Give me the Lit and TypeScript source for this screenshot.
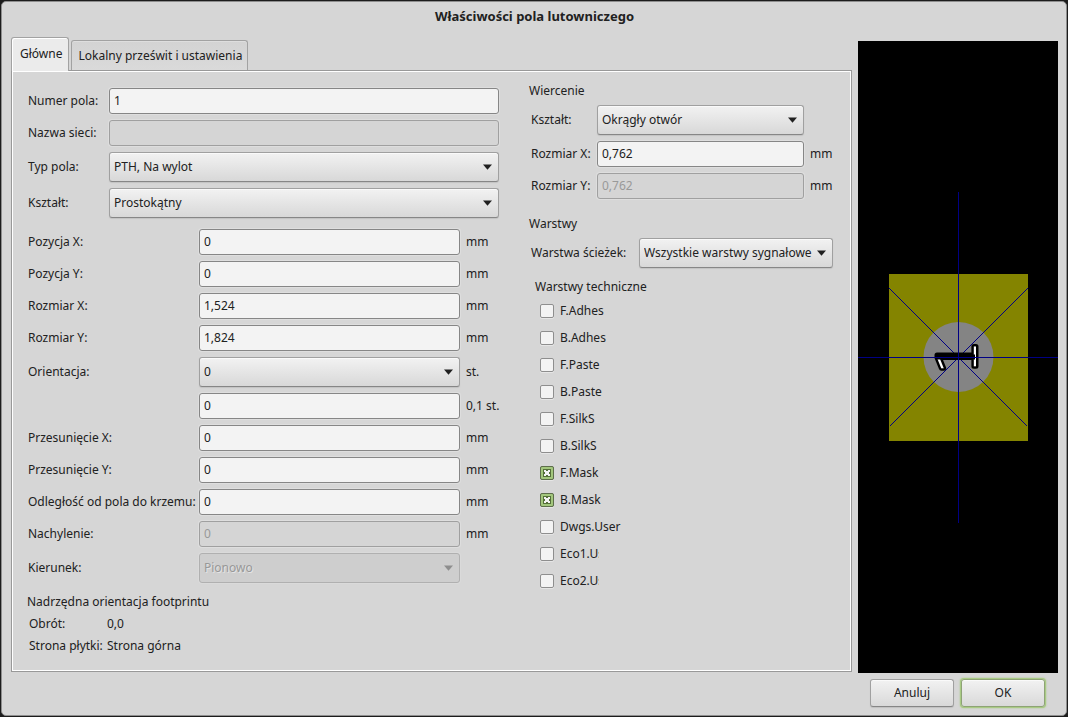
import { LitElement, html, css, svg, nothing } from "lit";
import { customElement, state } from "lit/decorators.js";
import { classMap } from "lit/directives/class-map.js";

interface Field {
  id: string;
  label: string;
  value: string;
  kind?: "select";
  unit?: string;
  disabled?: boolean;
}

const IDENTITY: Field[] = [
  { id: "number", label: "Numer pola:", value: "1" },
  { id: "net", label: "Nazwa sieci:", value: "", disabled: true },
  { id: "type", label: "Typ pola:", value: "PTH, Na wylot", kind: "select" },
  { id: "shape", label: "Kształt:", value: "Prostokątny", kind: "select" },
];

const GEOMETRY: Field[] = [
  { id: "pos-x", label: "Pozycja X:", value: "0", unit: "mm" },
  { id: "pos-y", label: "Pozycja Y:", value: "0", unit: "mm" },
  { id: "size-x", label: "Rozmiar X:", value: "1,524", unit: "mm" },
  { id: "size-y", label: "Rozmiar Y:", value: "1,824", unit: "mm" },
  { id: "orient", label: "Orientacja:", value: "0", kind: "select", unit: "st." },
  { id: "orient-fine", label: "", value: "0", unit: "0,1 st." },
  { id: "offset-x", label: "Przesunięcie X:", value: "0", unit: "mm" },
  { id: "offset-y", label: "Przesunięcie Y:", value: "0", unit: "mm" },
  { id: "die", label: "Odległość od pola do krzemu:", value: "0", unit: "mm" },
  { id: "delta", label: "Nachylenie:", value: "0", unit: "mm", disabled: true },
  { id: "dir", label: "Kierunek:", value: "Pionowo", kind: "select", disabled: true },
];

const DRILL: Field[] = [
  { id: "drill-shape", label: "Kształt:", value: "Okrągły otwór", kind: "select" },
  { id: "drill-x", label: "Rozmiar X:", value: "0,762", unit: "mm" },
  { id: "drill-y", label: "Rozmiar Y:", value: "0,762", unit: "mm", disabled: true },
];

const COPPER: Field[] = [
  { id: "copper", label: "Warstwa ścieżek:", value: "Wszystkie warstwy sygnałowe", kind: "select" },
];

const LAYERS = [
  { name: "F.Adhes" },
  { name: "B.Adhes" },
  { name: "F.Paste" },
  { name: "B.Paste" },
  { name: "F.SilkS" },
  { name: "B.SilkS" },
  { name: "F.Mask", on: true },
  { name: "B.Mask", on: true },
  { name: "Dwgs.User" },
  { name: "Eco1.User", clipped: true },
  { name: "Eco2.User", clipped: true },
];

@customElement("app-root")
export class AppRoot extends LitElement {
  @state() private tab = 0;

  static styles = css`
    :host {
      display: flex;
      min-height: 100vh;
      box-sizing: border-box;
      padding: 1px 1px 2px;
      background: #1c1c1c;
      font: 12px/18px "Noto Sans", sans-serif;
      color: #212121;
    }
    * {
      box-sizing: border-box;
    }
    .dialog {
      flex: 1;
      display: flex;
      flex-direction: column;
      min-width: 0;
      background: #d6d6d6;
      border: 1px solid #8e8e8e;
      border-radius: 5px;
      padding: 5px 8px 8px 9px;
    }
    .title {
      margin: 0;
      font-size: 13px;
      line-height: 18px;
      font-weight: 700;
      text-align: center;
    }
    .main {
      flex: 1;
      display: flex;
      gap: 6px;
      margin-top: 14px;
    }
    .book {
      flex: 1;
      min-width: 0;
      display: flex;
      flex-direction: column;
    }
    .tabs {
      display: flex;
      align-items: flex-end;
      gap: 2px;
      height: 31px;
    }
    .tab {
      height: 30px;
      padding: 0 5px 0 6px;
      font: inherit;
      color: inherit;
      white-space: nowrap;
      border: 1px solid #a2a2a2;
      border-bottom: 0;
      border-radius: 3px 3px 0 0;
      background: linear-gradient(#d3d3d3, #dadada);
      box-shadow: inset 0 1px #dedede;
    }
    .tab.active {
      height: 34px;
      margin-bottom: -1px;
      padding: 0 6px 1px 8px;
      background: #ebebeb;
      box-shadow: inset 1px 1px #fff;
      position: relative;
    }
    .panel {
      flex: 1;
      display: flex;
      gap: 30px;
      padding: 17px 15px 15px 16px;
      border: 1px solid #999;
      box-shadow: inset 0 0 0 1px #fff;
    }
    .left {
      flex: 1;
      min-width: 0;
    }
    .right {
      width: 307px;
    }
    .form {
      display: grid;
      gap: 6px 0;
      align-items: center;
    }
    .identity {
      grid-template-columns: 81px minmax(0, 1fr);
    }
    .geometry {
      grid-template-columns: 171px minmax(0, 1fr) 39px;
      margin-top: 11px;
    }
    .drill {
      grid-template-columns: 66px minmax(0, 1fr) 32px;
      margin: 5px 0 0 2px;
    }
    .copper {
      grid-template-columns: 108px minmax(0, 1fr);
      margin: 5px 3px 0 2px;
    }
    .label,
    .unit {
      white-space: nowrap;
    }
    .unit {
      padding-left: 6px;
    }
    .input,
    .select {
      width: 100%;
      min-width: 0;
      margin: 0;
      font: inherit;
      color: inherit;
      border-radius: 3px;
      outline: 0;
    }
    .input {
      height: 26px;
      padding: 0 4px 2px;
      border: 1px solid #868686;
      background: #f3f3f3;
      box-shadow: 0 0 0 1px #dedede;
    }
    .input:disabled {
      border-color: #a0a0a0;
      background: #d5d5d5;
      color: #999;
    }
    .combo {
      display: grid;
      align-items: center;
    }
    .combo > * {
      grid-area: 1 / 1;
    }
    .select {
      appearance: none;
      height: 30px;
      padding: 0 17px 0 4px;
      border: 1px solid #a0a0a0;
      border-bottom-color: #868686;
      background: linear-gradient(#f2f2f2, #d8d8d8);
      box-shadow: inset 0 1px #fafafa, 0 1px 1px #c2c2c2;
    }
    .select:disabled {
      opacity: 1;
      border-color: #b0b0b0;
      background: #cecece;
      color: #989898;
      text-shadow: 1px 1px #e4e4e4;
      box-shadow: 0 0 0 1px #dadada;
    }
    .caret {
      justify-self: end;
      margin-right: 7px;
      width: 9px;
      height: 6px;
      fill: #202020;
      pointer-events: none;
    }
    .select:disabled + .caret {
      fill: #8e8e8e;
    }
    .heading {
      margin: 0;
      font: inherit;
    }
    .right > .heading:first-child {
      margin-top: -6px;
    }
    .drill + .heading {
      margin-top: 16px;
    }
    .tech {
      margin: 10px 0 0 6px;
    }
    .layers {
      list-style: none;
      margin: 1px 0 0 5px;
      padding: 0;
    }
    .layer {
      display: flex;
      align-items: center;
      height: 27px;
    }
    .check {
      display: flex;
      align-items: center;
      gap: 6px;
    }
    .box {
      appearance: none;
      width: 14px;
      height: 14px;
      margin: 0;
      border: 1px solid #8e8e8e;
      border-radius: 2px;
      background: #f3f3f3;
      box-shadow: 0 1px #e6e6e6;
    }
    .mark {
      width: 14px;
      height: 14px;
      margin-left: -20px;
      pointer-events: none;
      visibility: hidden;
    }
    .box:checked + .mark {
      visibility: visible;
    }
    .clipped {
      width: 39px;
      overflow: hidden;
    }
    .parent {
      margin: 10px 0 0 -1px;
    }
    .facts {
      display: grid;
      grid-template-columns: 78px 1fr;
      gap: 4px 0;
      margin: 4px 0 0 2px;
      white-space: nowrap;
    }
    .fact {
      margin: 0;
    }
    .preview {
      width: 200px;
      margin-top: 2px;
      margin-bottom: -1px;
      background: #000;
      display: flex;
    }
    .canvas {
      width: 100%;
      height: 100%;
      display: block;
    }
    .digit {
      font: 200 53px "DejaVu Sans", sans-serif;
      paint-order: stroke;
    }
    .actions {
      display: flex;
      justify-content: flex-end;
      gap: 7px;
      padding: 7px 13px 0 0;
    }
    .button {
      width: 84px;
      height: 28px;
      padding: 0;
      font: inherit;
      color: inherit;
      border: 1px solid #a0a0a0;
      border-bottom-color: #868686;
      border-radius: 3px;
      background: linear-gradient(#f2f2f2, #d9d9d9);
      box-shadow: inset 0 1px #fafafa, 0 1px 1px #c0c0c0;
    }
    .button.default {
      border-color: #8ea376;
      box-shadow: inset 0 1px #fafafa, 0 0 0 1px #a9cb84, 0 0 2px 1px #a9cb84;
    }
  `;

  private control(f: Field) {
    if (f.kind !== "select") {
      return html`<input
        class="input"
        id=${f.id}
        type="text"
        aria-label=${f.label ? nothing : f.unit ?? nothing}
        .value=${f.value}
        ?disabled=${f.disabled}
      />`;
    }
    return html`<div class="combo">
      <select class="select" id=${f.id} ?disabled=${f.disabled}>
        <option>${f.value}</option>
      </select>
      <svg class="caret" viewBox="0 0 9 6" aria-hidden="true"><path d="M0 0.5h9L4.5 5.8z" /></svg>
    </div>`;
  }

  private rows(fields: Field[], units = true) {
    return fields.map(
      (f) => html`<label class="label" for=${f.id}>${f.label}</label>${this.control(f)}${units
          ? html`<span class="unit">${f.unit}</span>`
          : nothing}`,
    );
  }

  private preview() {
    return html`<svg class="canvas" viewBox="0 0 200 632" role="img" aria-label="Podgląd pola">
      ${svg`
        <rect x="31" y="233" width="139" height="167" fill="#848400" />
        <circle cx="100.5" cy="316" r="35" fill="#848484" />
        <path d="M31 247L169.500 385.500M170 247L32 385" stroke="#000084" stroke-width="1" shape-rendering="crispEdges" />
        <text class="digit" transform="translate(118 333) rotate(-90)" fill="#fff"
          stroke="#000" stroke-width="5" stroke-linejoin="round">1</text>
        <path d="M79 316h38" stroke="#000" stroke-width="5" />
        <path d="M0 316.500h200M100.500 151v331" stroke="#000084" stroke-width="1" />
      `}
    </svg>`;
  }

  render() {
    const tabs = ["Główne", "Lokalny prześwit i ustawienia"];
    return html`<main class="dialog">
      <h1 class="title">Właściwości pola lutowniczego</h1>
      <div class="main">
        <div class="book">
          <div class="tabs" role="tablist">
            ${tabs.map(
              (t, i) => html`<button
                class=${classMap({ tab: true, active: i === this.tab })}
                role="tab"
                aria-selected=${i === this.tab}
                @click=${() => (this.tab = i)}
              >${t}</button>`,
            )}
          </div>
          <div class="panel" role="tabpanel">
            <div class="left">
              <div class="form identity">${this.rows(IDENTITY, false)}</div>
              <div class="form geometry">${this.rows(GEOMETRY)}</div>
              <section class="parent">
                <h2 class="heading">Nadrzędna orientacja footprintu</h2>
                <dl class="facts">
                  <dt>Obrót:</dt>
                  <dd class="fact">0,0</dd>
                  <dt>Strona płytki:</dt>
                  <dd class="fact">Strona górna</dd>
                </dl>
              </section>
            </div>
            <div class="right">
              <h2 class="heading">Wiercenie</h2>
              <div class="form drill">${this.rows(DRILL)}</div>
              <h2 class="heading">Warstwy</h2>
              <div class="form copper">${this.rows(COPPER, false)}</div>
              <section class="tech">
                <h3 class="heading">Warstwy techniczne</h3>
                <ul class="layers">
                  ${LAYERS.map(
                    (l) => html`<li class="layer">
                      <label class="check">
                        <input class="box" type="checkbox" .checked=${!!l.on} />
                        <svg class="mark" viewBox="0 0 14 14" aria-hidden="true">
                          <rect x="0.5" y="0.5" width="13" height="13" rx="1.500" fill="#a3c77d" stroke="#5d6e4b" />
                          <rect x="3.5" y="3.5" width="7" height="7" fill="#f3f3f3" stroke="#55703a" />
                          <path
                            d="M6 4h2v1H6zM6 9h2v1H6zM4 6h1v2H4zM9 6h1v2H9z"
                            fill="#55703a"
                          />
                        </svg>
                        <span class=${classMap({ clipped: !!l.clipped })}>${l.name}</span>
                      </label>
                    </li>`,
                  )}
                </ul>
              </section>
            </div>
          </div>
        </div>
        <div class="preview">${this.preview()}</div>
      </div>
      <div class="actions">
        <button class="button">Anuluj</button>
        <button class="button default">OK</button>
      </div>
    </main>`;
  }
}
